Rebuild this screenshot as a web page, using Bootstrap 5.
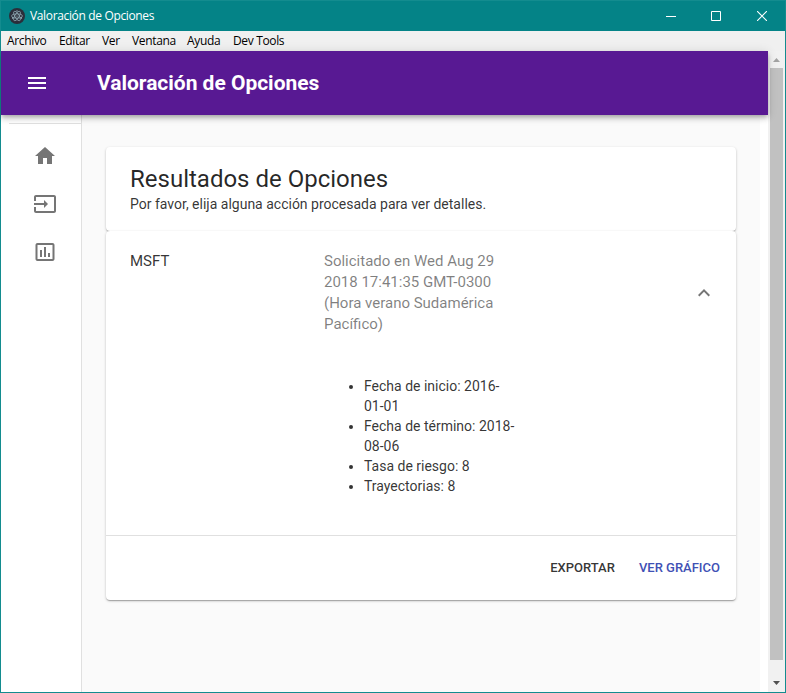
<!DOCTYPE html>
<html lang="es">
<head>
<meta charset="utf-8">
<title>Valoración de Opciones</title>
<link href="https://cdn.jsdelivr.net/npm/bootstrap@5.3.0/dist/css/bootstrap.min.css" rel="stylesheet">
<style>
body{font-family:Roboto,sans-serif;font-size:14px;line-height:20px;color:rgba(0,0,0,.8);background:#fff}
svg{display:block;flex:none}
.window{height:693px;border:1px solid #138c8f}
.titlebar{height:30px;background:#048387;color:#fff;padding-left:8px;font:12px/30px "Open Sans",sans-serif}
.title-text{margin-left:5px;letter-spacing:-.35px}
.win-btn{width:46px;height:30px}
.win-min{padding-left:2px}
.menubar{height:20px;background:#f0f0f0;color:#000;padding-left:6px;font:12px/20px "Open Sans",sans-serif;letter-spacing:-.35px}
.menubar span{white-space:nowrap}
.w1{width:52px}.w2{width:43px}.w3{width:30px}.w4{width:55px}.w5{width:46px}
.appbar{height:64px;background:#581993;color:#fff;padding-left:24px;z-index:2;box-shadow:0 2px 4px -1px rgba(0,0,0,.2),0 4px 5px 0 rgba(0,0,0,.14),0 1px 10px 0 rgba(0,0,0,.12)}
.appbar h1{font-size:21px;font-weight:700;line-height:24px;margin-left:48px;letter-spacing:-.02px}
.side{width:81px;border-right:1px solid #e0e0e0;padding-top:8px}
.side hr{margin:0 0 0 8px;border-top:1px solid #e0e0e0;opacity:1}
.side a{height:48px;padding-left:32px;color:#757575}
.main{width:678px;background:#fafafa;padding:32px 24px 0}
.panel{background:#fff;border-radius:4px;box-shadow:0 1px 3px 0 rgba(0,0,0,.2),0 1px 1px 0 rgba(0,0,0,.14),0 2px 1px -1px rgba(0,0,0,.12)}
.panel-head{height:84px;padding:16px 24px}
.panel-head h2{font-size:24px;font-weight:400;line-height:32px;margin:0 0 -1px;color:rgba(0,0,0,.85)}
.panel-body{height:369px}
.summary{height:124px;padding:20px 20px 0 24px;font-size:15px;line-height:21px}
.c1{width:194px}.c2{width:194px}
.when{color:rgba(0,0,0,.5)}
.chevron{margin-top:30px;color:#757575}
.details{height:180px;padding:21px 24px 0 218px}
.details ul{width:194px;padding-left:40px;margin:0}
.actions{height:65px;border-top:1px solid #e0e0e0;padding-right:16px;gap:24px;font-size:13px;font-weight:500}
.accent{color:#3f51b5}
.scroller{width:17px;background:#f1f1f1}
.thumb{width:13px;height:592px;background:#c1c1c1}
</style>
<script src="https://cdn.jsdelivr.net/npm/bootstrap@5.3.0/dist/js/bootstrap.bundle.min.js"></script>
</head>
<body class="overflow-hidden">
<div class="window d-flex flex-column">
  <header class="titlebar d-flex align-items-center">
    <svg width="16" height="16" viewBox="0 0 16 16"><circle cx="8" cy="8" r="8" fill="#2b2e3a"/><g fill="none" stroke="#9dbac4" stroke-width=".65"><ellipse cx="8" cy="8" rx="5.400" ry="2.100"/><ellipse cx="8" cy="8" rx="5.400" ry="2.100" transform="rotate(60 8 8)"/><ellipse cx="8" cy="8" rx="5.400" ry="2.100" transform="rotate(120 8 8)"/></g><g fill="#a9c6cf"><circle cx="8" cy="8" r=".6"/><circle cx="3.600" cy="10" r=".7"/><circle cx="12.400" cy="10" r=".7"/><circle cx="8" cy="2.800" r=".6"/></g></svg>
    <span class="title-text me-auto">Valoración de Opciones</span>
    <div class="win-btn win-min d-flex align-items-center justify-content-center"><svg width="10" height="10"><path d="M0 5.500h10" stroke="#fff"/></svg></div>
    <div class="win-btn d-flex align-items-center justify-content-center"><svg width="10" height="10"><path d="M.5.500h9v9h-9z" fill="none" stroke="#fff"/></svg></div>
    <div class="win-btn d-flex align-items-center justify-content-center"><svg width="10" height="10"><path d="M0 0l10 10M10 0L0 10" stroke="#fff" stroke-width="1.100"/></svg></div>
  </header>
  <nav class="menubar d-flex"><span class="w1">Archivo</span><span class="w2">Editar</span><span class="w3">Ver</span><span class="w4">Ventana</span><span class="w5">Ayuda</span><span>Dev Tools</span></nav>
  <div class="d-flex flex-grow-1">
    <div class="d-flex flex-column flex-grow-1">
      <div class="appbar d-flex align-items-center position-relative">
        <svg width="24" height="24" viewBox="0 0 24 24" fill="#fff"><path d="M3 18h18v-2H3v2zm0-5h18v-2H3v2zm0-7v2h18V6H3z"/></svg>
        <h1 class="mb-0">Valoración de Opciones</h1>
      </div>
      <div class="d-flex flex-grow-1">
        <aside class="side">
          <hr>
          <nav class="d-flex flex-column pt-2">
            <a class="d-flex align-items-center"><svg width="24" height="24" viewBox="0 0 24 24" fill="currentColor"><path d="M10 20v-6h4v6h5v-8h3L12 3 2 12h3v8z"/></svg></a>
            <a class="d-flex align-items-center"><svg width="24" height="24" viewBox="0 0 24 24" fill="currentColor"><path d="M21 3.010H3c-1.100 0-2 .9-2 2V9h2V4.990h18v14.030H3V15H1v4.010c0 1.100.9 1.980 2 1.980h18c1.100 0 2-.88 2-1.980v-14c0-1.110-.9-2-2-2zM11 16l4-4-4-4v3H1v2h10v3z"/></svg></a>
            <a class="d-flex align-items-center"><svg width="24" height="24" viewBox="0 0 24 24" fill="currentColor"><path d="M9 17H7v-7h2v7zm4 0h-2V7h2v10zm4 0h-2v-4h2v4zm2.500 2.100h-15V5h15v14.100zm0-16.100h-15c-1.100 0-2 .9-2 2v14c0 1.100.9 2 2 2h15c1.100 0 2-.9 2-2V5c0-1.100-.9-2-2-2z"/></svg></a>
          </nav>
        </aside>
        <main class="main">
          <section class="panel panel-head">
            <h2>Resultados de Opciones</h2>
            <p class="mb-0">Por favor, elija alguna acción procesada para ver detalles.</p>
          </section>
          <section class="panel panel-body">
            <div class="summary d-flex">
              <div class="c1">MSFT</div>
              <div class="c2 when">Solicitado en Wed Aug 29<br>2018 17:41:35 GMT-0300<br>(Hora verano Sudamérica<br>Pacífico)</div>
              <svg class="ms-auto chevron" width="24" height="24" viewBox="0 0 24 24" fill="currentColor"><path d="M12 8l-6 6 1.410 1.410L12 10.830l4.590 4.580L18 14z"/></svg>
            </div>
            <div class="details d-flex"><ul>
              <li>Fecha de inicio: 2016-<br>01-01</li>
              <li>Fecha de término: 2018-<br>08-06</li>
              <li>Tasa de riesgo: 8</li>
              <li>Trayectorias: 8</li>
            </ul></div>
            <div class="actions d-flex align-items-center justify-content-end"><span>EXPORTAR</span><span class="accent">VER GRÁFICO</span></div>
          </section>
        </main>
      </div>
    </div>
    <div class="scroller d-flex flex-column align-items-center justify-content-between">
      <svg width="17" height="17"><path d="M5 11h7L8.500 7z" fill="#a3a3a3"/></svg>
      <div class="thumb"></div>
      <svg class="mt-auto" width="17" height="17"><path d="M5 6h7L8.500 10z" fill="#505050"/></svg>
    </div>
  </div>
</div>
</body>
</html>
